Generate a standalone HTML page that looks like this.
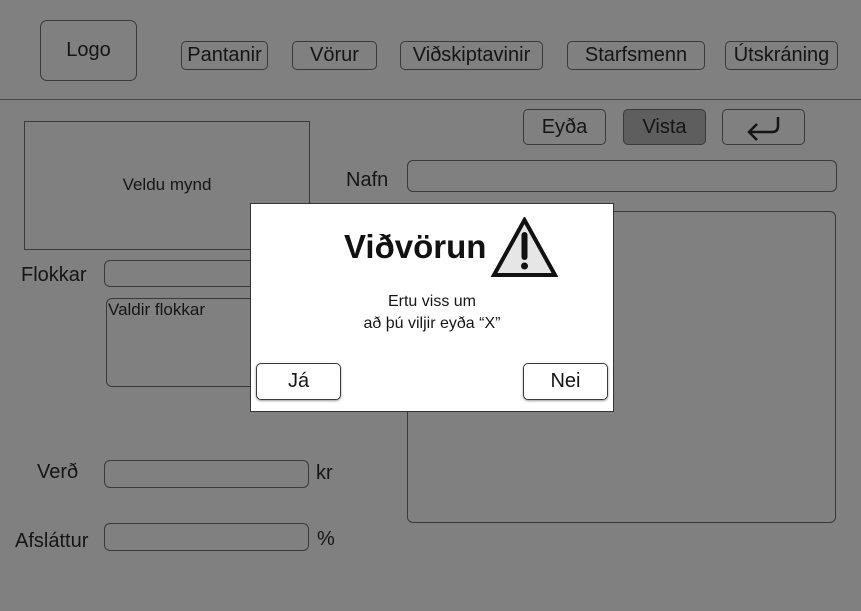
<!DOCTYPE html>
<html><head><meta charset="utf-8"><style>
*{margin:0;padding:0;box-sizing:border-box}
body{width:861px;height:611px;background:#808080;font-family:"Liberation Sans",sans-serif;position:relative;overflow:hidden;color:#111}
.a{position:absolute}
.b{position:absolute;border:1px solid #3a3a3a;border-radius:5px;display:flex;align-items:center;justify-content:center;font-size:20px;color:#151515}
.i{position:absolute;border:1px solid #3a3a3a;border-radius:6px}
.l{position:absolute;font-size:20px;color:#151515}
</style></head><body>
<div class="b" style="left:40px;top:20px;width:97px;height:61px;border-radius:7px">Logo</div>
<div class="b" style="left:181px;top:41px;width:87px;height:29px">Pantanir</div>
<div class="b" style="left:292px;top:41px;width:85px;height:29px">Vörur</div>
<div class="b" style="left:400px;top:41px;width:143px;height:29px">Viðskiptavinir</div>
<div class="b" style="left:567px;top:41px;width:138px;height:29px">Starfsmenn</div>
<div class="b" style="left:725px;top:41px;width:113px;height:29px">Útskráning</div>
<div class="a" style="left:0;top:99px;width:861px;height:1px;background:#444"></div>
<div class="b" style="left:523px;top:109px;width:83px;height:36px">Eyða</div>
<div class="b" style="left:623px;top:109px;width:83px;height:36px;background:#5e5e5e">Vista</div>
<div class="b" style="left:722px;top:109px;width:83px;height:36px"><svg width="48" height="30" viewBox="0 0 48 30"><path d="M38 5 V14 Q38 20 32 20 H10 M17 12 L9 20 L17 28" fill="none" stroke="#151515" stroke-width="2.5"/></svg></div>
<div class="a" style="left:24px;top:121px;width:286px;height:129px;border:1px solid #3a3a3a"></div>
<div class="l" style="left:24px;top:175px;width:286px;text-align:center;font-size:17px">Veldu mynd</div>
<div class="l" style="left:346px;top:169px">Nafn</div>
<div class="i" style="left:407px;top:160px;width:430px;height:32px"></div>
<div class="i" style="left:407px;top:211px;width:429px;height:312px"></div>
<div class="l" style="left:21px;top:264px">Flokkar</div>
<div class="i" style="left:104px;top:260px;width:200px;height:27px"></div>
<div class="i" style="left:106px;top:298px;width:200px;height:89px"></div>
<div class="l" style="left:108px;top:300px;font-size:17px">Valdir flokkar</div>
<div class="l" style="left:37px;top:461px">Verð</div>
<div class="i" style="left:104px;top:460px;width:205px;height:28px"></div>
<div class="l" style="left:316px;top:462px">kr</div>
<div class="l" style="left:15px;top:530px">Afsláttur</div>
<div class="i" style="left:104px;top:523px;width:205px;height:28px"></div>
<div class="l" style="left:317px;top:528px">%</div>
<div class="a" style="left:250px;top:203px;width:364px;height:209px;background:#fff;border:1px solid #333">
 <div class="a" style="left:93px;top:24px;font-size:33px;font-weight:bold;color:#111">Viðvörun</div>
 <svg class="a" style="left:240px;top:13px" width="67" height="61" viewBox="0 0 67 61"><path d="M33.5 3 L64 58 H3 Z" fill="#e6e6e6" stroke="#111" stroke-width="4" stroke-linejoin="miter"/><path d="M33.5 18 V40" stroke="#111" stroke-width="6" stroke-linecap="round"/><circle cx="33.5" cy="49" r="3.5" fill="#111"/></svg>
 <div class="a" style="left:0;top:87px;width:362px;text-align:center;font-size:16px;line-height:22px;color:#151515">Ertu viss um<br>að þú viljir eyða “X”</div>
 <div class="b" style="left:5px;top:159px;width:85px;height:37px;box-shadow:0 1px 2px rgba(0,0,0,.4)">Já</div>
 <div class="b" style="left:272px;top:159px;width:85px;height:37px;box-shadow:0 1px 2px rgba(0,0,0,.4)">Nei</div>
</div>
</body></html>
